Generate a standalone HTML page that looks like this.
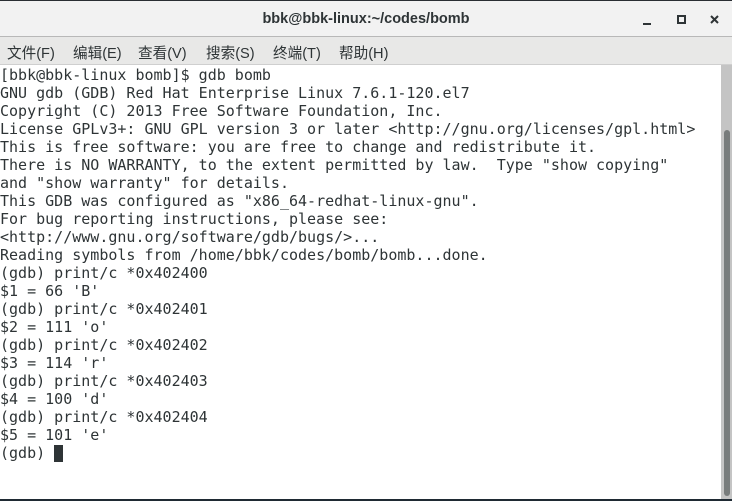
<!DOCTYPE html>
<html><head><meta charset="utf-8"><style>
html,body{margin:0;padding:0;width:732px;height:501px;overflow:hidden;background:#fff}
.title{position:absolute;left:0;top:0;width:732px;height:37px;background:#f2f2f2;border-bottom:1px solid #b8b8b8;box-sizing:border-box;border-top:1px solid #2a2e33}
.title .t{position:absolute;left:0;right:0;top:10px;text-align:center;font:bold 14.5px "Liberation Sans","DejaVu Sans",sans-serif;color:#2e3436}
.menu{position:absolute;left:0;top:37px;width:732px;height:28px;background:#e8e8e7;border-bottom:1px solid #cfcfcf;box-sizing:border-box;font:14.6px "Liberation Sans","Noto Sans CJK SC",sans-serif;color:#2e3436}
.menu span{position:absolute;top:5px}
.term{position:absolute;left:0;top:66px;width:720px;font:15px/18px "DejaVu Sans Mono",monospace;color:#2e3436;white-space:pre}
.sb{position:absolute;left:721px;top:65px;width:11px;height:434px;background:#c4c4c4}
.th{position:absolute;left:724px;top:130px;width:6px;height:366px;background:#787c7c;border-radius:3px}
.bot{position:absolute;left:0;top:499px;width:732px;height:2px;background:#1f2a33}
.cur{display:inline-block;width:9px;height:17px;background:#2e3436;vertical-align:-4px}
</style></head><body>
<div class="title"><div class="t">bbk@bbk-linux:~/codes/bomb</div>
<svg style="position:absolute;left:640px;top:10px" width="90" height="20"><rect x="3" y="12" width="8" height="2" fill="#2e3436"/><rect x="38" y="5" width="7" height="7" fill="none" stroke="#2e3436" stroke-width="2"/><path d="M71 5l7 7M78 5l-7 7" stroke="#2e3436" stroke-width="2"/></svg></div>
<div class="menu"><span style="left:7px">文件(F)</span><span style="left:73px">编辑(E)</span><span style="left:138px">查看(V)</span><span style="left:206px">搜索(S)</span><span style="left:273px">终端(T)</span><span style="left:339px">帮助(H)</span></div>
<div class="term">[bbk@bbk-linux bomb]$ gdb bomb
GNU gdb (GDB) Red Hat Enterprise Linux 7.6.1-120.el7
Copyright (C) 2013 Free Software Foundation, Inc.
License GPLv3+: GNU GPL version 3 or later &lt;http://gnu.org/licenses/gpl.html&gt;
This is free software: you are free to change and redistribute it.
There is NO WARRANTY, to the extent permitted by law.  Type "show copying"
and "show warranty" for details.
This GDB was configured as "x86_64-redhat-linux-gnu".
For bug reporting instructions, please see:
&lt;http://www.gnu.org/software/gdb/bugs/&gt;...
Reading symbols from /home/bbk/codes/bomb/bomb...done.
(gdb) print/c *0x402400
$1 = 66 'B'
(gdb) print/c *0x402401
$2 = 111 'o'
(gdb) print/c *0x402402
$3 = 114 'r'
(gdb) print/c *0x402403
$4 = 100 'd'
(gdb) print/c *0x402404
$5 = 101 'e'
(gdb) <span class="cur"></span></div>
<div class="sb"></div><div class="th"></div><div class="bot"></div>
</body></html>
